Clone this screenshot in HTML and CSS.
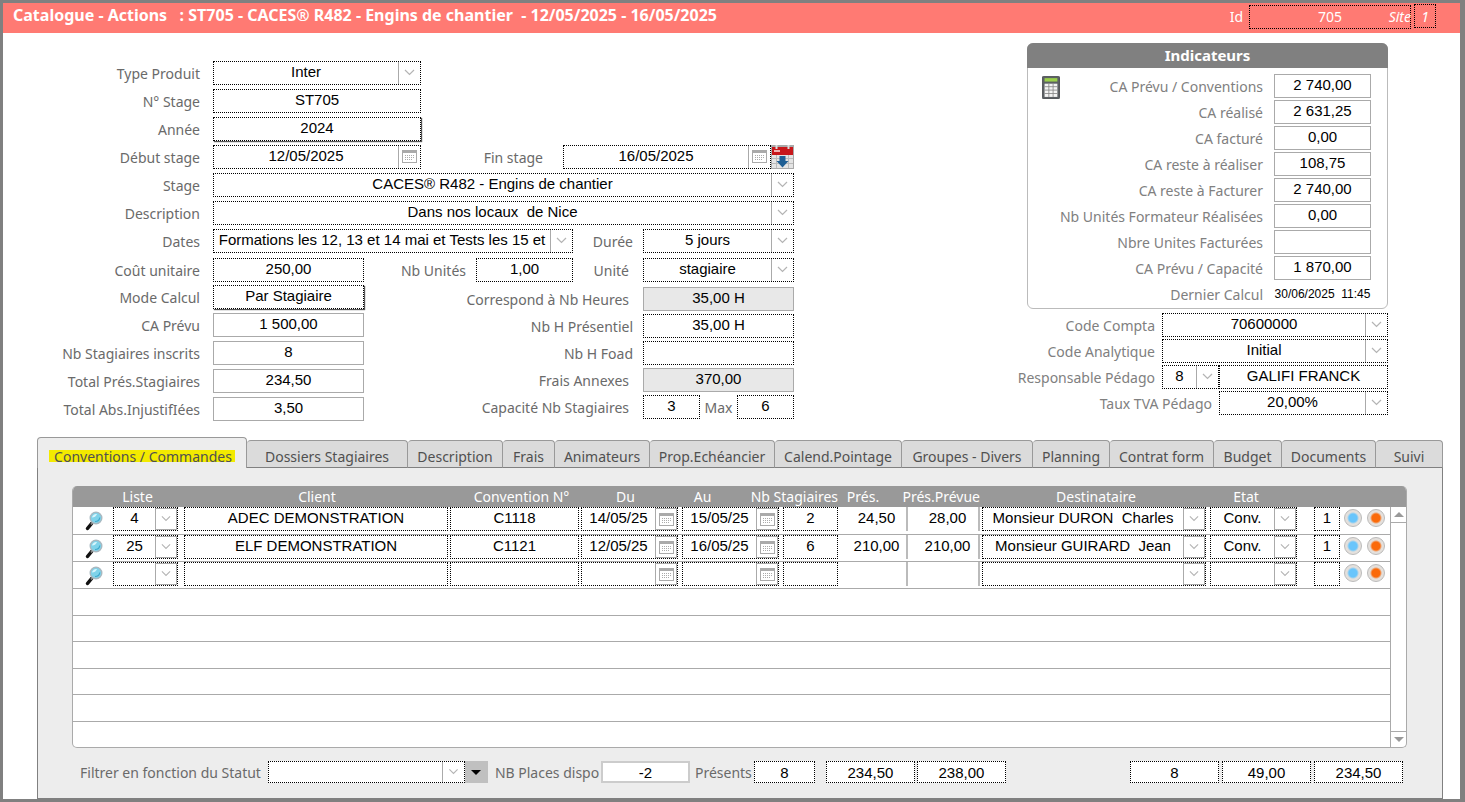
FILE: index.html
```html
<!DOCTYPE html>
<html lang="fr">
<head>
  <meta charset="UTF-8" />
  <meta name="viewport" content="width=device-width, initial-scale=1" />
  <title>Catalogue - Actions : ST705</title>
  <link rel="stylesheet" href="styles.css">
</head>
<body>
  <svg class="sprites" aria-hidden="true">
    <symbol id="chevron" viewBox="0 0 21 22">
      <path d="M6 8l4.500 4.500 4.500-4.500" fill="none" stroke="#b4b4b4" stroke-width="1.200"/>
    </symbol>
    <symbol id="cal" viewBox="0 0 21 22">
      <rect x="3.500" y="4.500" width="14" height="12" fill="#fff" stroke="#aaa"/>
      <path d="M3 5.500h15" stroke="#aaa" stroke-width="3"/>
      <path d="M6 9.500h10M6 11.500h10M6 13.500h7" stroke="#aaa" stroke-dasharray="1 1"/>
    </symbol>
    <symbol id="loupe" viewBox="0 0 18 20">
      <path d="M7 12l-4.500 5.500" stroke="#111" stroke-width="3.500" stroke-linecap="round"/>
      <path d="M8 11l-2 2.500" stroke="#888" stroke-width="2"/>
      <circle cx="11" cy="7" r="5.800" fill="#7fd3ea" stroke="#a9b8c0" stroke-width="1.400"/>
      <path d="M7 6.500a4.200 4.200 0 0 1 5-3.500c-1 2.500-2.500 3.500-5 3.500z" fill="#d8f5fc"/>
      <path d="M10 10.500c2.500 0 4.500-1.500 4.800-4" fill="none" stroke="#3fa9cc" stroke-width="1.200"/>
    </symbol>
  </svg>

  <header class="bandeau">
    <h1>Catalogue - Actions &nbsp; : ST705 - CACES® R482 - Engins de chantier &nbsp;- 12/05/2025 - 16/05/2025</h1>
    <div class="ids">
      <label for="id">Id</label>
      <div class="id-box">
        <input id="id" class="field" value="705">
        <label class="site" for="site">Site</label>
      </div>
      <input id="site" class="field site-num" value="1">
    </div>
  </header>

  <main>
    <div class="top">
      <form class="fiche">
        <div class="row">
          <label class="first" for="type">Type Produit</label>
          <div class="combo w208"><select id="type"><option>Inter</option></select><svg><use href="#chevron"/></svg></div>
        </div>
        <div class="row">
          <label class="first" for="num">N° Stage</label>
          <input id="num" class="field w208" value="ST705">
        </div>
        <div class="row">
          <label class="first" for="annee">Année</label>
          <input id="annee" class="field w208 relief" value="2024">
        </div>
        <div class="row">
          <label class="first" for="debut">Début stage</label>
          <div class="combo w208"><input id="debut" value="12/05/2025"><button type="button" aria-label="Calendrier"><svg><use href="#cal"/></svg></button></div>
          <label class="next fin" for="fin">Fin stage</label>
          <div class="combo w208"><input id="fin" value="16/05/2025"><button type="button" aria-label="Calendrier"><svg><use href="#cal"/></svg></button></div>
          <button type="button" class="report" aria-label="Reporter la date">
            <svg viewBox="0 0 23 24">
              <rect width="23" height="24" fill="#a9a9a9"/>
              <rect x="1" y="9" width="21" height="14" fill="#e4e4e4"/>
              <path d="M1 13.500h21M1 18.500h21M5.500 9v14M17.500 9v14" stroke="#bbb"/>
              <rect x="1" y="2" width="21" height="8" fill="#c8171b"/>
              <rect x="3" y="5" width="6" height="2" fill="#f0b0b0"/>
              <path d="M5.500 0v4M17.500 0v4" stroke="#ddd" stroke-width="2"/>
              <path d="M8.500 11h6v5h3l-6 6.500-6-6.500h3z" fill="#1f5f94"/>
            </svg>
          </button>
        </div>
        <div class="row">
          <label class="first" for="stage">Stage</label>
          <div class="combo grow"><select id="stage"><option>CACES® R482 - Engins de chantier</option></select><svg><use href="#chevron"/></svg></div>
        </div>
        <div class="row">
          <label class="first" for="desc">Description</label>
          <div class="combo grow"><select id="desc"><option>Dans nos locaux &nbsp;de Nice</option></select><svg><use href="#chevron"/></svg></div>
        </div>
        <div class="row">
          <label class="first" for="dates">Dates</label>
          <div class="combo grow"><select id="dates"><option>Formations les 12, 13 et 14 mai et Tests les 15 et</option></select><svg><use href="#chevron"/></svg></div>
          <label class="mid near" for="duree">Durée</label>
          <div class="combo w152"><select id="duree"><option>5 jours</option></select><svg><use href="#chevron"/></svg></div>
        </div>
        <div class="row cout">
          <label class="first" for="cout">Coût unitaire</label>
          <input id="cout" class="field w152" value="250,00">
          <label class="next unites" for="unites">Nb Unités</label>
          <input id="unites" class="field w97" value="1,00">
          <label class="mid" for="unite">Unité</label>
          <div class="combo w152"><select id="unite"><option>stagiaire</option></select><svg><use href="#chevron"/></svg></div>
        </div>
        <div class="cols">
          <div class="col">
            <div class="row">
              <label class="first" for="mode">Mode Calcul</label>
              <input id="mode" class="field w152 relief" value="Par Stagiaire">
            </div>
            <div class="row">
              <label class="first" for="ca">CA Prévu</label>
              <input id="ca" class="field w152 solid" value="1 500,00" readonly>
            </div>
            <div class="row">
              <label class="first" for="inscrits">Nb Stagiaires inscrits</label>
              <input id="inscrits" class="field w152 solid" value="8" readonly>
            </div>
            <div class="row">
              <label class="first" for="pres">Total Prés.Stagiaires</label>
              <input id="pres" class="field w152 solid" value="234,50" readonly>
            </div>
            <div class="row">
              <label class="first" for="abs">Total Abs.InjustifIées</label>
              <input id="abs" class="field w152 solid" value="3,50" readonly>
            </div>
          </div>
          <div class="col heures">
            <div class="row">
              <label class="next" for="heures">Correspond à Nb Heures</label>
              <input id="heures" class="field w152 solid gris" value="35,00 H" readonly>
            </div>
            <div class="row">
              <label class="next near" for="presentiel">Nb H Présentiel</label>
              <input id="presentiel" class="field w152" value="35,00 H">
            </div>
            <div class="row">
              <label class="next near" for="foad">Nb H Foad</label>
              <input id="foad" class="field w152" value="">
            </div>
            <div class="row">
              <label class="next" for="frais">Frais Annexes</label>
              <input id="frais" class="field w152 solid gris" value="370,00" readonly>
            </div>
            <div class="row">
              <label class="next" for="capa">Capacité Nb Stagiaires</label>
              <input id="capa" class="field w57" value="3">
              <label class="max" for="max">Max</label>
              <input id="max" class="field w57" value="6">
            </div>
          </div>
        </div>
      </form>

      <aside>
        <section class="indicateurs">
          <h2>Indicateurs</h2>
          <div class="corps">
            <button type="button" class="calc" aria-label="Calculer">
              <svg viewBox="0 0 21 27">
                <rect x="0.500" y="0.500" width="20" height="26" rx="1" fill="#5c6064" stroke="#45484b"/>
                <rect x="3" y="2.500" width="15" height="4" fill="#9ad04a"/>
                <path d="M3 9h15v15.500h-15z" fill="#f4f4f4"/>
                <path d="M3 12.500h15M3 16.500h15M3 20.500h15M8 9v15.500M13 9v15.500" stroke="#888"/>
              </svg>
            </button>
            <div class="lignes">
              <div class="row"><label for="i1">CA Prévu / Conventions</label><input id="i1" class="field solid w97" value="2 740,00" readonly></div>
              <div class="row"><label for="i2">CA réalisé</label><input id="i2" class="field solid w97" value="2 631,25" readonly></div>
              <div class="row"><label for="i3">CA facturé</label><input id="i3" class="field solid w97" value="0,00" readonly></div>
              <div class="row"><label for="i4">CA reste à réaliser</label><input id="i4" class="field solid w97" value="108,75" readonly></div>
              <div class="row"><label for="i5">CA reste à Facturer</label><input id="i5" class="field solid w97" value="2 740,00" readonly></div>
              <div class="row"><label for="i6">Nb Unités Formateur Réalisées</label><input id="i6" class="field solid w97" value="0,00" readonly></div>
              <div class="row"><label for="i7">Nbre Unites Facturées</label><input id="i7" class="field solid w97" value="" readonly></div>
              <div class="row"><label for="i8">CA Prévu / Capacité</label><input id="i8" class="field solid w97" value="1 870,00" readonly></div>
              <div class="row"><label for="i9">Dernier Calcul</label><output id="i9" class="w97">30/06/2025 &nbsp;11:45</output></div>
            </div>
          </div>
        </section>
        <div class="codes">
          <div class="row">
            <label for="compta">Code Compta</label>
            <div class="combo w226"><select id="compta"><option>70600000</option></select><svg><use href="#chevron"/></svg></div>
          </div>
          <div class="row">
            <label for="analytique">Code Analytique</label>
            <div class="combo w226"><select id="analytique"><option>Initial</option></select><svg><use href="#chevron"/></svg></div>
          </div>
          <div class="row">
            <label for="resp">Responsable Pédago</label>
            <div class="combo w57"><select id="resp"><option>8</option></select><svg><use href="#chevron"/></svg></div>
            <input class="field w169" value="GALIFI FRANCK" aria-label="Nom du responsable">
          </div>
          <div class="row">
            <label for="tva">Taux TVA Pédago</label>
            <div class="combo w169"><select id="tva"><option>20,00%</option></select><svg><use href="#chevron"/></svg></div>
          </div>
        </div>
      </aside>
    </div>

    <nav class="onglets">
      <a href="#" class="actif"><span>Conventions / Commandes</span></a>
      <a href="#">Dossiers Stagiaires</a>
      <a href="#">Description</a>
      <a href="#">Frais</a>
      <a href="#">Animateurs</a>
      <a href="#">Prop.Echéancier</a>
      <a href="#">Calend.Pointage</a>
      <a href="#">Groupes - Divers</a>
      <a href="#">Planning</a>
      <a href="#">Contrat form</a>
      <a href="#">Budget</a>
      <a href="#">Documents</a>
      <a href="#">Suivi</a>
    </nav>

    <section class="panneau">
      <div class="liste">
        <table>
          <colgroup>
            <col class="c-loupe"><col class="c-liste"><col><col class="c-conv"><col class="c-date"><col class="c-date">
            <col class="c-nb"><col class="c-pres"><col class="c-prevue"><col class="c-dest"><col class="c-etat">
            <col class="c-num"><col class="c-rond"><col class="c-rond">
          </colgroup>
          <thead>
            <tr>
              <th></th>
              <th class="th-liste">Liste</th>
              <th>Client</th>
              <th class="th-conv">Convention N°</th>
              <th class="th-date">Du</th>
              <th class="th-au">Au</th>
              <th><span>Nb Stagiaires</span></th>
              <th class="th-pres">Prés.</th>
              <th><span>Prés.Prévue</span></th>
              <th>Destinataire</th>
              <th class="th-etat">Etat</th>
              <th></th>
              <th></th>
              <th></th>
            </tr>
          </thead>
          <tbody id="lignes"></tbody>
        </table>
        <div class="ascenseur">
          <button type="button" aria-label="Monter"><svg viewBox="0 0 10 5"><path d="M5 0l5 5H0z" fill="#999"/></svg></button>
          <button type="button" aria-label="Descendre"><svg viewBox="0 0 10 5"><path d="M0 0h10l-5 5z" fill="#999"/></svg></button>
        </div>
      </div>

      <div class="pied">
        <label for="statut">Filtrer en fonction du Statut</label>
        <div class="combo w197"><select id="statut"><option></option></select><svg><use href="#chevron"/></svg></div>
        <button type="button" class="filtre" aria-label="Filtrer"><svg viewBox="0 0 10 5"><path d="M0 0h10l-5 5z"/></svg></button>
        <label class="dispo" for="dispo">NB Places dispo</label>
        <input id="dispo" class="field solid w89 clair" value="-2" readonly>
        <label class="presents" for="presents">Présents</label>
        <input id="presents" class="field w61" value="8">
        <div class="totaux">
          <input class="field w89" value="234,50" aria-label="Total présences">
          <input class="field w89" value="238,00" aria-label="Total prévu">
        </div>
        <div class="totaux droite">
          <input class="field w89" value="8" aria-label="Stagiaires">
          <input class="field w89" value="49,00" aria-label="Heures">
          <input class="field w89" value="234,50" aria-label="Total">
        </div>
      </div>
    </section>
  </main>

  <script src="script.js"></script>
</body>
</html>
```
FILE: styles.css
```css
* {
  box-sizing: border-box;
}
body {
  margin: 0;
  min-height: 100vh;
  border: 3px solid #808080;
  border-right-width: 5px;
  border-bottom-width: 4px;
  background: #fff;
  font-family: "Noto Sans", Tahoma, sans-serif;
  font-size: 14px;
  color: #6a6a6a;
}
.sprites {
  display: none;
}
input, select, button {
  font-family: "Liberation Sans", Arial, sans-serif;
  font-size: 15px;
  color: #000;
  margin: 0;
  padding: 0;
  border: none;
  background: none;
  border-radius: 0;
}
label {
  white-space: nowrap;
}

/* bandeau */
.bandeau {
  display: flex;
  justify-content: space-between;
  height: 30px;
  padding: 1px 24px 0 10px;
  background: #ff7a73;
  color: #fff;
}
.bandeau h1 {
  margin: 0;
  font-size: 16px;
  line-height: 22px;
  white-space: nowrap;
}
.bandeau input {
  padding: 0;
  font-family: inherit;
  font-size: 14px;
  color: #fff;
  background: none;
}
.ids {
  display: flex;
  line-height: 26px;
}
.id-box {
  position: relative;
  margin: 0 3px 0 6px;
}
.id-box input {
  width: 162px;
}
.site {
  position: absolute;
  right: 0;
  top: 0;
  font-style: italic;
}
.bandeau .site-num {
  width: 22px;
  font-style: italic;
}

/* champs */
.field {
  height: 24px;
  padding-bottom: 3px;
  border: 1px dotted #000;
  background: #fff;
  text-align: center;
}
.solid {
  border: 1px solid #aaa;
}
.clair {
  border: 2px solid #ccc;
}
.gris {
  background: #e8e8e8;
}
.relief {
  box-shadow: 1px 1px 1px #555;
}
.combo {
  display: flex;
  flex-shrink: 0;
  height: 24px;
  border: 1px dotted #000;
  background: #fff;
}
.combo input,
.combo select {
  flex: 1;
  min-width: 0;
  width: 0;
  padding-bottom: 3px;
  appearance: none;
  text-align: center;
  text-align-last: center;
}
.combo svg {
  display: block;
  width: 21px;
  height: 22px;
}
.combo > svg,
.combo button {
  width: 22px;
  border-left: 1px solid #aaa;
}
.w57 { width: 57px; }
.w61 { width: 61px; }
.w89 { width: 89px; }
.w97 { width: 97px; }
.w152 { width: 151px; }
.w169 { width: 169px; }
.w197 { width: 197px; }
.w208 { width: 208px; }
.w226 { width: 226px; }
.grow { flex: 1; }

/* fiche */
.top {
  display: flex;
  gap: 225px;
  padding: 10px 72px 0 0;
}
.fiche {
  flex: 1;
  padding-top: 18px;
}
.row {
  display: flex;
  align-items: center;
  height: 24px;
}
.fiche .row {
  margin-bottom: 4px;
}
.first {
  width: 210px;
  padding-right: 13px;
  text-align: right;
}
.next {
  flex: 1;
  padding-right: 14px;
  text-align: right;
}
.mid {
  width: 70px;
  padding-right: 14px;
  text-align: right;
}
.near {
  padding-right: 10px;
}
.fin {
  padding-right: 20px;
}
.unites {
  padding-right: 10px;
}
.report {
  width: 23px;
  height: 24px;
}
.report svg,
.calc svg {
  display: block;
}
.fiche .cout {
  margin: 5px 0 3px;
}
.cols {
  display: flex;
}
.heures {
  flex: 1;
  padding-top: 2px;
}
.heures .row {
  margin-bottom: 3px;
}
.max {
  width: 37px;
  text-align: center;
}

/* indicateurs */
aside {
  width: 369px;
}
aside .row {
  margin-bottom: 2px;
  justify-content: flex-end;
}
aside label {
  color: #808080;
}
.indicateurs {
  margin-left: 8px;
  border: 1px solid #bbb;
  border-radius: 6px;
}
.indicateurs h2 {
  margin: -1px;
  border-radius: 6px 6px 0 0;
  background: #808080;
  color: #fff;
  font-size: 15px;
  line-height: 25px;
  text-align: center;
}
.corps {
  display: flex;
  padding: 7px 16px 0 14px;
}
.calc {
  width: 21px;
  height: 27px;
}
.lignes {
  flex: 1;
}
.lignes label {
  padding-right: 11px;
}
.lignes output {
  font: 12px "Liberation Sans", Arial, sans-serif;
  color: #000;
  text-align: center;
  white-space: nowrap;
}
.codes {
  padding-top: 4px;
}
.codes label {
  padding-right: 7px;
}

/* onglets */
.onglets {
  display: grid;
  grid-template-columns: 210fr 161fr 95fr 52fr 95fr 125fr 127fr 131fr 77fr 104fr 68fr 94fr 67fr;
  align-items: end;
  margin: 12px 17px 0 34px;
}
.onglets a {
  height: 28px;
  border: 1px solid #999;
  border-left-width: 0;
  border-bottom-color: #808080;
  border-radius: 4px 4px 0 0;
  background: #dbdbdb;
  color: #505050;
  line-height: 31px;
  text-align: center;
  text-decoration: none;
  white-space: nowrap;
}
.onglets .actif {
  height: 31px;
  border-left-width: 1px;
  border-bottom: none;
  background: #ededed;
  line-height: 37px;
}
.actif span {
  padding: 0 3px 0 5px;
  background: linear-gradient(#f3ea00, #f3ea00) 0 3px / 100% 12px no-repeat;
}
.panneau {
  margin: 0 17px 0 34px;
  padding: 18px 35px 15px 34px;
  border: 1px solid #808080;
  border-top: none;
  background: #ededed;
}

/* liste */
.liste {
  display: flex;
  border: 1px solid #aaa;
  border-top: none;
  border-radius: 5px;
  background: #fff;
  overflow: hidden;
}
table {
  flex: 1;
  width: 0;
  table-layout: fixed;
  border-collapse: collapse;
}
.c-loupe { width: 40px; }
.c-liste { width: 71px; }
.c-conv { width: 131px; }
.c-date { width: 101px; }
.c-nb { width: 57px; }
.c-pres { width: 70px; }
.c-prevue { width: 72px; }
.c-dest { width: 228px; }
.c-etat { width: 104px; }
.c-num { width: 30px; }
.c-rond { width: 23px; }
th {
  height: 21px;
  padding: 0;
  background: #999;
  color: #fff;
  font-weight: normal;
  line-height: 21px;
  white-space: nowrap;
}
th span {
  display: flex;
  justify-content: flex-end;
  padding-right: 2px;
}
.th-liste { padding-right: 22px; }
.th-date { padding-right: 12px; }
.th-au { padding-right: 60px; }
.th-conv { padding-left: 12px; }
.th-pres { padding-right: 24px; }
.th-etat { padding-right: 32px; }
tbody tr {
  height: 27px;
}
tbody tr.vide:nth-child(odd) {
  height: 26px;
}
td {
  height: 26px;
  padding: 0 2px 2px 0;
  border-bottom: 1px solid #aaa;
  vertical-align: top;
}
tr.vide td {
  padding: 0;
  height: auto;
}
tbody tr:last-child td {
  border-bottom: none;
}
td .field {
  display: block;
  width: 100%;
}
td .combo > svg,
td .combo button {
  border: 1px solid #aaa;
}
.t-liste { padding-right: 6px; }
.t-date,
.t-etat,
.t-dest { padding-right: 4px; }
.t-etat { padding-right: 17px; }
.t-pres .field {
  padding-left: 7px;
  border: none;
  border-right: 2px solid #bbb;
}
.t-num { padding-right: 4px; }
.loupe {
  display: block;
  margin: 4px 0 0 12px;
  width: 18px;
  height: 20px;
}
.loupe svg {
  display: block;
  width: 18px;
  height: 20px;
}
.rond {
  display: block;
  width: 18px;
  height: 18px;
  margin-top: 2px;
  border: 1px solid #bbb;
  border-radius: 50%;
  background: radial-gradient(circle, #69c5fb 0 4px, #e4e0dc 6px);
}
.orange {
  background: radial-gradient(circle, #fb6a0a 0 4px, #e4e0dc 6px);
}
.ascenseur {
  display: flex;
  flex-direction: column;
  width: 16px;
  border-left: 1px solid #aaa;
}
.ascenseur::before {
  content: "";
  height: 21px;
  margin-left: -1px;
  background: #999;
}
.ascenseur button {
  height: 16px;
  border-bottom: 1px solid #aaa;
}
.ascenseur button:last-child {
  margin-top: auto;
  border-top: 1px solid #aaa;
  border-bottom: none;
}
.ascenseur svg,
.filtre svg {
  display: block;
  width: 10px;
  height: 5px;
  margin: auto;
}

/* pied */
.pied {
  display: flex;
  align-items: center;
  height: 22px;
  margin-top: 13px;
  padding: 0 4px 0 8px;
}
.pied .field,
.pied .combo {
  height: 22px;
  padding-bottom: 0;
}
.pied .combo {
  margin-left: 7px;
}
.pied .combo svg {
  height: 20px;
}
.filtre {
  width: 23px;
  height: 22px;
  background: #c0c0c0;
}
.pied .dispo {
  width: 113px;
  padding-left: 7px;
}
.pied .presents {
  width: 64px;
  padding-left: 5px;
}
.totaux {
  display: flex;
  gap: 2px;
  margin-left: 11px;
}
.droite {
  gap: 3px;
  margin-left: auto;
}
```
FILE: script.js
```js
const rows = [
  ["4", "ADEC DEMONSTRATION", "C1118", "14/05/25", "15/05/25", "2", "24,50", "28,00", "Monsieur DURON \u00a0Charles", "Conv.", "1"],
  ["25", "ELF DEMONSTRATION", "C1121", "12/05/25", "16/05/25", "6", "210,00", "210,00", "Monsieur GUIRARD \u00a0Jean", "Conv.", "1"],
  ["", "", "", "", "", "", "", "", "", "", ""]
];

function field(name, v) {
  return `<input class="field" aria-label="${name}" value="${v}">`;
}
function combo(name, v) {
  return `<div class="combo"><select aria-label="${name}"><option>${v}</option></select><svg><use href="#chevron"/></svg></div>`;
}
function date(name, v) {
  return `<div class="combo"><input aria-label="${name}" value="${v}"><button type="button" aria-label="Calendrier"><svg><use href="#cal"/></svg></button></div>`;
}

let html = "";
for (const r of rows) {
  html += `<tr>
    <td><button type="button" class="loupe" aria-label="Ouvrir"><svg><use href="#loupe"/></svg></button></td>
    <td class="t-liste">${combo("Liste", r[0])}</td>
    <td>${field("Client", r[1])}</td>
    <td>${field("Convention", r[2])}</td>
    <td class="t-date">${date("Du", r[3])}</td>
    <td class="t-date">${date("Au", r[4])}</td>
    <td>${field("Nb Stagiaires", r[5])}</td>
    <td class="t-pres">${field("Prés.", r[6])}</td>
    <td class="t-pres">${field("Prés.Prévue", r[7])}</td>
    <td class="t-dest">${combo("Destinataire", r[8])}</td>
    <td class="t-etat">${combo("Etat", r[9])}</td>
    <td class="t-num">${field("Nombre", r[10])}</td>
    <td><button type="button" class="rond" aria-label="Voir"></button></td>
    <td><button type="button" class="rond orange" aria-label="Supprimer"></button></td>
  </tr>`;
}
for (let i = 0; i < 6; i++) {
  html += `<tr class="vide"><td colspan="14"></td></tr>`;
}
document.getElementById("lignes").innerHTML = html;
```
